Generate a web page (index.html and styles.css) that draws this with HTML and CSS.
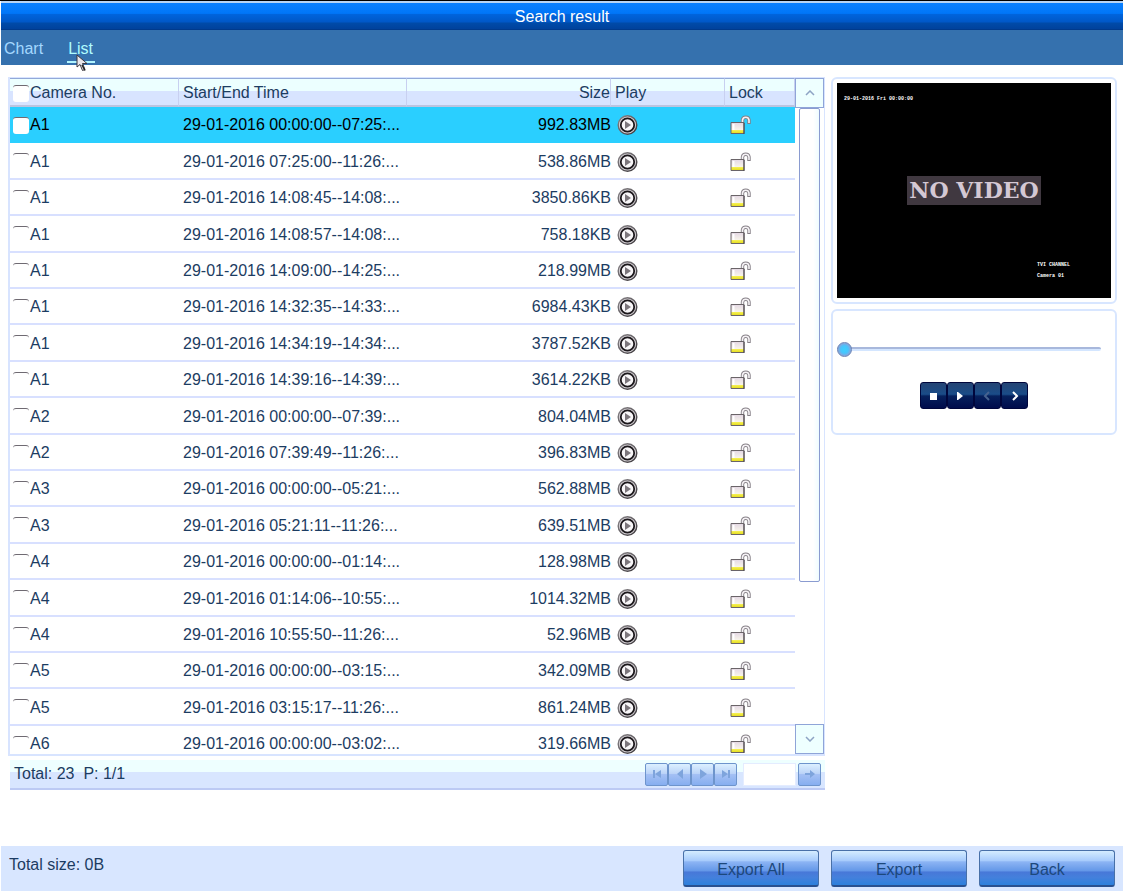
FILE: index.html
```html
<!DOCTYPE html>
<html lang="en">
<head>
<meta charset="utf-8">
<title>Search result</title>
<link rel="stylesheet" href="styles.css">
</head>
<body>
<svg class="sprite" aria-hidden="true">
  <defs>
    <linearGradient id="ring" x1="0" y1="0" x2="1" y2="1">
      <stop offset="0" stop-color="#8a868a"/><stop offset="1" stop-color="#3a363a"/>
    </linearGradient>
    <linearGradient id="lockBody" x1="0" y1="0" x2="0" y2="1">
      <stop offset="0" stop-color="#e4d8e4"/><stop offset="0.65" stop-color="#f7f3ea"/><stop offset="0.72" stop-color="#f4ee50"/><stop offset="1" stop-color="#e4dc18"/>
    </linearGradient>
  </defs>
  <symbol id="play" viewBox="0 0 20 20">
    <circle cx="10" cy="10" r="9.300" fill="#d4d0d4" stroke="url(#ring)" stroke-width="1.400"/>
    <circle cx="10" cy="10" r="6.700" fill="#f8f6f8" stroke="#1c181c" stroke-width="1.800"/>
    <path d="M7.500 6l6 4-6 4z" fill="#7c767c"/>
  </symbol>
  <symbol id="unlock" viewBox="0 0 20 20">
    <path d="M12 9V5a3.300 3.300 0 0 1 6.500 0v4" fill="none" stroke="#857f86" stroke-width="3.400"/>
    <path d="M12 9V5a3.300 3.300 0 0 1 6.500 0v3" fill="none" stroke="#f6f3f6" stroke-width="1.600"/>
    <path d="M.5 7.500h13v11H.5z" fill="url(#lockBody)" stroke="#6a6468"/>
    <path d="M3 9v6" stroke="#fff" stroke-width="2"/>
    <path d="M13.500 8v11" stroke="#4b454b"/>
  </symbol>
</svg>

<header class="titlebar"><h1 class="title">Search result</h1></header>

<nav class="tabs">
  <a class="tab" href="#chart">Chart</a>
  <a class="tab tab-active" href="#list" aria-current="page">List
    <svg class="cursor" viewBox="0 0 12 18" aria-hidden="true"><path d="M1 1v12l3-2.500 2.500 6 2.500-1-2.500-6H11z" fill="#e9e6ea" stroke="#3c3840" stroke-width="1"/><path d="M6 11l3 5.500" stroke="#222" stroke-width="1.500"/></svg>
  </a>
</nav>

<main class="main">
  <section class="results">
    <div class="list">
      <div class="viewport">
        <table class="grid">
          <colgroup><col class="col-camera"><col class="col-time"><col><col class="col-play"><col class="col-lock"></colgroup>
          <thead>
            <tr>
              <th class="camera"><label class="pick"><input class="check" type="checkbox">Camera No.</label></th>
              <th>Start/End Time</th><th class="size">Size</th><th class="play">Play</th><th>Lock</th>
            </tr>
          </thead>
          <tbody>
            <tr class="selected"><td class="camera"><label class="pick"><input class="check" type="checkbox">A1</label></td><td>29-01-2016 00:00:00--07:25:...</td><td class="size">992.83MB</td><td class="play"><button class="icon" aria-label="Play"><svg><use href="#play"/></svg></button></td><td><button class="icon" aria-label="Lock"><svg><use href="#unlock"/></svg></button></td></tr>
            <tr><td class="camera"><label class="pick"><input class="check" type="checkbox">A1</label></td><td>29-01-2016 07:25:00--11:26:...</td><td class="size">538.86MB</td><td class="play"><button class="icon" aria-label="Play"><svg><use href="#play"/></svg></button></td><td><button class="icon" aria-label="Lock"><svg><use href="#unlock"/></svg></button></td></tr>
            <tr><td class="camera"><label class="pick"><input class="check" type="checkbox">A1</label></td><td>29-01-2016 14:08:45--14:08:...</td><td class="size">3850.86KB</td><td class="play"><button class="icon" aria-label="Play"><svg><use href="#play"/></svg></button></td><td><button class="icon" aria-label="Lock"><svg><use href="#unlock"/></svg></button></td></tr>
            <tr><td class="camera"><label class="pick"><input class="check" type="checkbox">A1</label></td><td>29-01-2016 14:08:57--14:08:...</td><td class="size">758.18KB</td><td class="play"><button class="icon" aria-label="Play"><svg><use href="#play"/></svg></button></td><td><button class="icon" aria-label="Lock"><svg><use href="#unlock"/></svg></button></td></tr>
            <tr><td class="camera"><label class="pick"><input class="check" type="checkbox">A1</label></td><td>29-01-2016 14:09:00--14:25:...</td><td class="size">218.99MB</td><td class="play"><button class="icon" aria-label="Play"><svg><use href="#play"/></svg></button></td><td><button class="icon" aria-label="Lock"><svg><use href="#unlock"/></svg></button></td></tr>
            <tr><td class="camera"><label class="pick"><input class="check" type="checkbox">A1</label></td><td>29-01-2016 14:32:35--14:33:...</td><td class="size">6984.43KB</td><td class="play"><button class="icon" aria-label="Play"><svg><use href="#play"/></svg></button></td><td><button class="icon" aria-label="Lock"><svg><use href="#unlock"/></svg></button></td></tr>
            <tr><td class="camera"><label class="pick"><input class="check" type="checkbox">A1</label></td><td>29-01-2016 14:34:19--14:34:...</td><td class="size">3787.52KB</td><td class="play"><button class="icon" aria-label="Play"><svg><use href="#play"/></svg></button></td><td><button class="icon" aria-label="Lock"><svg><use href="#unlock"/></svg></button></td></tr>
            <tr><td class="camera"><label class="pick"><input class="check" type="checkbox">A1</label></td><td>29-01-2016 14:39:16--14:39:...</td><td class="size">3614.22KB</td><td class="play"><button class="icon" aria-label="Play"><svg><use href="#play"/></svg></button></td><td><button class="icon" aria-label="Lock"><svg><use href="#unlock"/></svg></button></td></tr>
            <tr><td class="camera"><label class="pick"><input class="check" type="checkbox">A2</label></td><td>29-01-2016 00:00:00--07:39:...</td><td class="size">804.04MB</td><td class="play"><button class="icon" aria-label="Play"><svg><use href="#play"/></svg></button></td><td><button class="icon" aria-label="Lock"><svg><use href="#unlock"/></svg></button></td></tr>
            <tr><td class="camera"><label class="pick"><input class="check" type="checkbox">A2</label></td><td>29-01-2016 07:39:49--11:26:...</td><td class="size">396.83MB</td><td class="play"><button class="icon" aria-label="Play"><svg><use href="#play"/></svg></button></td><td><button class="icon" aria-label="Lock"><svg><use href="#unlock"/></svg></button></td></tr>
            <tr><td class="camera"><label class="pick"><input class="check" type="checkbox">A3</label></td><td>29-01-2016 00:00:00--05:21:...</td><td class="size">562.88MB</td><td class="play"><button class="icon" aria-label="Play"><svg><use href="#play"/></svg></button></td><td><button class="icon" aria-label="Lock"><svg><use href="#unlock"/></svg></button></td></tr>
            <tr><td class="camera"><label class="pick"><input class="check" type="checkbox">A3</label></td><td>29-01-2016 05:21:11--11:26:...</td><td class="size">639.51MB</td><td class="play"><button class="icon" aria-label="Play"><svg><use href="#play"/></svg></button></td><td><button class="icon" aria-label="Lock"><svg><use href="#unlock"/></svg></button></td></tr>
            <tr><td class="camera"><label class="pick"><input class="check" type="checkbox">A4</label></td><td>29-01-2016 00:00:00--01:14:...</td><td class="size">128.98MB</td><td class="play"><button class="icon" aria-label="Play"><svg><use href="#play"/></svg></button></td><td><button class="icon" aria-label="Lock"><svg><use href="#unlock"/></svg></button></td></tr>
            <tr><td class="camera"><label class="pick"><input class="check" type="checkbox">A4</label></td><td>29-01-2016 01:14:06--10:55:...</td><td class="size">1014.32MB</td><td class="play"><button class="icon" aria-label="Play"><svg><use href="#play"/></svg></button></td><td><button class="icon" aria-label="Lock"><svg><use href="#unlock"/></svg></button></td></tr>
            <tr><td class="camera"><label class="pick"><input class="check" type="checkbox">A4</label></td><td>29-01-2016 10:55:50--11:26:...</td><td class="size">52.96MB</td><td class="play"><button class="icon" aria-label="Play"><svg><use href="#play"/></svg></button></td><td><button class="icon" aria-label="Lock"><svg><use href="#unlock"/></svg></button></td></tr>
            <tr><td class="camera"><label class="pick"><input class="check" type="checkbox">A5</label></td><td>29-01-2016 00:00:00--03:15:...</td><td class="size">342.09MB</td><td class="play"><button class="icon" aria-label="Play"><svg><use href="#play"/></svg></button></td><td><button class="icon" aria-label="Lock"><svg><use href="#unlock"/></svg></button></td></tr>
            <tr><td class="camera"><label class="pick"><input class="check" type="checkbox">A5</label></td><td>29-01-2016 03:15:17--11:26:...</td><td class="size">861.24MB</td><td class="play"><button class="icon" aria-label="Play"><svg><use href="#play"/></svg></button></td><td><button class="icon" aria-label="Lock"><svg><use href="#unlock"/></svg></button></td></tr>
            <tr><td class="camera"><label class="pick"><input class="check" type="checkbox">A6</label></td><td>29-01-2016 00:00:00--03:02:...</td><td class="size">319.66MB</td><td class="play"><button class="icon" aria-label="Play"><svg><use href="#play"/></svg></button></td><td><button class="icon" aria-label="Lock"><svg><use href="#unlock"/></svg></button></td></tr>
          </tbody>
        </table>
      </div>
      <div class="scrollbar">
        <button class="arrow" aria-label="Scroll up"><svg viewBox="0 0 10 6"><path d="M1 5l4-4 4 4"/></svg></button>
        <div class="track"><div class="thumb"></div></div>
        <button class="arrow" aria-label="Scroll down"><svg viewBox="0 0 10 6"><path d="M1 1l4 4 4-4"/></svg></button>
      </div>
    </div>
    <div class="pager">
      <span class="total">Total: 23&nbsp; P: 1/1</span>
      <div class="pages">
        <button class="page" aria-label="First page"><svg viewBox="0 0 12 12"><path d="M2 2h2v8H2zM10 2v8L4 6z"/></svg></button>
        <button class="page" aria-label="Previous page"><svg viewBox="0 0 12 12"><path d="M9 1v10L3 6z"/></svg></button>
        <button class="page" aria-label="Next page"><svg viewBox="0 0 12 12"><path d="M3 1v10l7-5z"/></svg></button>
        <button class="page" aria-label="Last page"><svg viewBox="0 0 12 12"><path d="M8 2h2v8H8zM2 2v8l6-4z"/></svg></button>
      </div>
      <input class="goto" type="text" aria-label="Page number">
      <button class="page" aria-label="Go to page"><svg viewBox="0 0 12 12"><path d="M1 5h5V2l5 4-5 4V7H1z"/></svg></button>
    </div>
  </section>

  <aside class="side">
    <div class="panel">
      <div class="video">
        <span class="osd">29-01-2016 Fri 00:00:00</span>
        <strong class="novideo">NO VIDEO</strong>
        <span class="osd osd-channel">TVI CHANNEL<br>Camera 01</span>
      </div>
    </div>
    <div class="panel player">
      <input class="seek" type="range" min="0" max="100" value="0" aria-label="Playback position">
      <div class="controls">
        <button class="control" aria-label="Stop"><svg viewBox="0 0 12 12"><path d="M3 3h7v7H3z" fill="#fff"/></svg></button>
        <button class="control" aria-label="Play"><svg viewBox="0 0 12 12"><path d="M3 2h1l5 4-5 4H3z" fill="#fff"/></svg></button>
        <button class="control" aria-label="Previous" disabled><svg viewBox="0 0 12 12"><path d="M8 2L4 6l4 4" fill="none" stroke="#46628f" stroke-width="2"/></svg></button>
        <button class="control" aria-label="Next"><svg viewBox="0 0 12 12"><path d="M5 2l4 4-4 4" fill="none" stroke="#fff" stroke-width="2"/></svg></button>
      </div>
    </div>
  </aside>
</main>

<footer class="footer">
  <span class="total-size">Total size: 0B</span>
  <button class="action">Export All</button>
  <button class="action">Export</button>
  <button class="action">Back</button>
</footer>
</body>
</html>
```

FILE: styles.css
```css
* { box-sizing: border-box; }

body {
  margin: 0;
  height: 100vh;
  display: flex;
  flex-direction: column;
  border-top: 1px solid #000;
  background: #fff;
  color: #1c3c62;
  font: 16px/20px "Liberation Sans", Arial, sans-serif;
  overflow: hidden;
}

button, input { margin: 0; padding: 0; font: inherit; color: inherit; }
button { display: flex; align-items: center; justify-content: center; }
.sprite { position: absolute; width: 0; height: 0; }

/* Title and tabs */
.titlebar {
  flex: none;
  height: 29px;
  margin-left: 1px;
  border-top: 2px solid #b8d4f4;
  border-bottom: 1px solid #003a8c;
  background: linear-gradient(#0a80ff 0, #0076f8 40%, #0064dc 44%, #0058c8 72%, #004aa8 78%, #00429c 100%);
}
.title {
  margin: 0;
  padding-top: 2px;
  text-align: center;
  color: #fff;
  font-size: 16px;
  font-weight: 400;
  line-height: 24px;
}
.tabs {
  flex: none;
  display: flex;
  gap: 24px;
  height: 35px;
  margin-left: 1px;
  padding: 7px 3px 0;
  background: #3571ae;
}
.tab {
  position: relative;
  height: 26px;
  color: #a4d8ff;
  line-height: 24px;
  text-decoration: none;
}
.tab-active { padding: 0 2px 0 1px; color: #b0fcff; border-bottom: 2px solid #b0f4ff; }
.cursor { position: absolute; left: 9px; top: 17px; width: 12px; height: 18px; }

/* Result list */
.main {
  flex: 1;
  min-height: 0;
  display: flex;
  gap: 6px;
  padding: 12px 6px 56px 8px;
}
.results {
  flex: 1;
  min-width: 0;
  display: flex;
  flex-direction: column;
  gap: 4px;
}
.list {
  flex: 1;
  min-height: 0;
  display: flex;
  border: 2px solid #d8e4ff;
  border-top-width: 1px;
  border-right-width: 1px;
}
.viewport { flex: 1; min-width: 0; overflow: hidden; }
.grid { width: 100%; table-layout: fixed; border-collapse: separate; border-spacing: 0; }
.col-camera { width: 169px; }
.col-time { width: 228px; }
.col-play { width: 114px; }
.col-lock { width: 70px; }
.grid th, .grid td {
  padding: 2px 0 0 4px;
  text-align: left;
  white-space: nowrap;
  font-weight: 400;
}
.grid th {
  height: 29px;
  border-top: 1px solid #92a8d8;
  border-bottom: 2px solid #bcc4e0;
  border-right: 1px solid #c8d0f0;
  background: linear-gradient(#ecffff 0, #ecffff 46%, #d8e4ff 48%, #d8e4ff 100%);
}
.grid td { height: 36px; border-bottom: 2px solid #d8e0ff; }
.grid tr:nth-child(5n+2) td, .grid tr:nth-child(5n+4) td { height: 37px; }
.grid .camera { padding-left: 3px; }
.grid .size { padding-right: 0; text-align: right; }
.grid .play { padding-left: 5px; }
.grid th.play { padding-left: 4px; }
.grid .selected td { background: #2acfff; border-color: #2acfff; color: #000; }
.pick { display: flex; align-items: center; gap: 1px; }
.check {
  appearance: none;
  width: 16px;
  height: 17px;
  border-top: 1px solid #6f6a72;
  border-radius: 3px;
  background: #fff;
}
.icon { width: 21px; height: 20px; border: 0; background: none; }
.grid td .icon { margin-left: 1px; }
.icon svg { width: 21px; height: 20px; }

/* Scrollbar */
.scrollbar { flex: none; width: 29px; display: flex; flex-direction: column; }
.arrow {
  flex: none;
  width: 29px;
  height: 30px;
  border: 1px solid #8fa4d8;
  background: #eeffff;
}
.arrow svg { width: 10px; height: 6px; fill: none; stroke: #8ea3c4; stroke-width: 1.5; }
.track { flex: 1; padding: 0 4px; }
.thumb {
  height: 77%;
  border: 1px solid #8a9bd0;
  border-radius: 2px;
  background: linear-gradient(90deg, #fff 70%, #effcff);
}

/* Pager */
.pager {
  flex: none;
  display: flex;
  align-items: center;
  height: 30px;
  margin-left: 2px;
  padding: 0 4px;
  border-bottom: 2px solid #bccaf4;
  background: linear-gradient(#eeffff 0, #eeffff 42%, #d8e6ff 44%, #d8e6ff 100%);
}
.total { flex: 1; }
.pages { display: flex; }
.page {
  width: 23px;
  height: 23px;
  border: 1px solid #6d94cc;
  border-radius: 2px;
  background: linear-gradient(#dcf0ff 0, #bcd4f8 45%, #a4c0f4 50%, #86aef0 100%);
}
.page svg { width: 12px; height: 12px; fill: #7ea4dc; }
.goto { width: 53px; height: 23px; margin: 0 2px 0 6px; border: 1px solid #e4ecff; background: #fff; }

/* Preview and playback */
.side { flex: none; width: 286px; display: flex; flex-direction: column; gap: 5px; }
.panel { padding: 4px; border: 2px solid #d8e6ff; border-radius: 6px; }
.video {
  position: relative;
  display: flex;
  align-items: center;
  justify-content: center;
  aspect-ratio: 274 / 215;
  background: #000;
}
.novideo {
  padding: 0 2px;
  background: #403840;
  color: #d4c8d4;
  font: bold 22px/29px "DejaVu Serif", serif;
}
.osd {
  position: absolute;
  left: 7px;
  top: 11px;
  color: #fff;
  font: bold 5px/11px "Liberation Mono", monospace;
}
.osd-channel { left: auto; right: 41px; top: auto; bottom: 16px; }
.player { height: 126px; padding: 30px 10px 0 4px; }
.seek {
  appearance: none;
  display: block;
  width: calc(100% - 4px);
  height: 16px;
  background: none;
}
.seek::-webkit-slider-runnable-track {
  height: 4px;
  border-top: 2px solid #a8b8dc;
  border-radius: 2px;
  background: #d4e6ff;
}
.seek::-webkit-slider-thumb {
  appearance: none;
  width: 15px;
  height: 15px;
  margin-top: -7px;
  border: 1px solid #6c84b4;
  border-radius: 50%;
  background: radial-gradient(#3cd0ff 0, #48c4fc 40%, #80a8e0 65%, #a8bce0 100%);
}
.controls { display: flex; justify-content: center; margin: 25px 0 0 5px; }
.control {
  width: 27px;
  height: 27px;
  border: 1px solid #00063c;
  border-radius: 3px;
  background: linear-gradient(#244474 0, #1a4c88 45%, #06205c 52%, #000c4c 100%);
}
.control svg { width: 12px; height: 12px; }

/* Footer */
.footer {
  flex: none;
  display: flex;
  gap: 12px;
  height: 45px;
  margin-left: 1px;
  padding: 4px 8px;
  background: #d8e6ff;
}
.total-size { flex: 1; padding-top: 5px; }
.action {
  width: 136px;
  height: 37px;
  padding-top: 3px;
  border: 1px solid #4870a8;
  border-bottom: 2px solid #285090;
  border-radius: 3px;
  background: linear-gradient(#d4ecff 0, #a8ccfc 28%, #8cb4f4 32%, #6498e8 58%, #4878d8 62%, #4480dc 78%, #2c80dc 100%);
  color: #1c487c;
}
```
